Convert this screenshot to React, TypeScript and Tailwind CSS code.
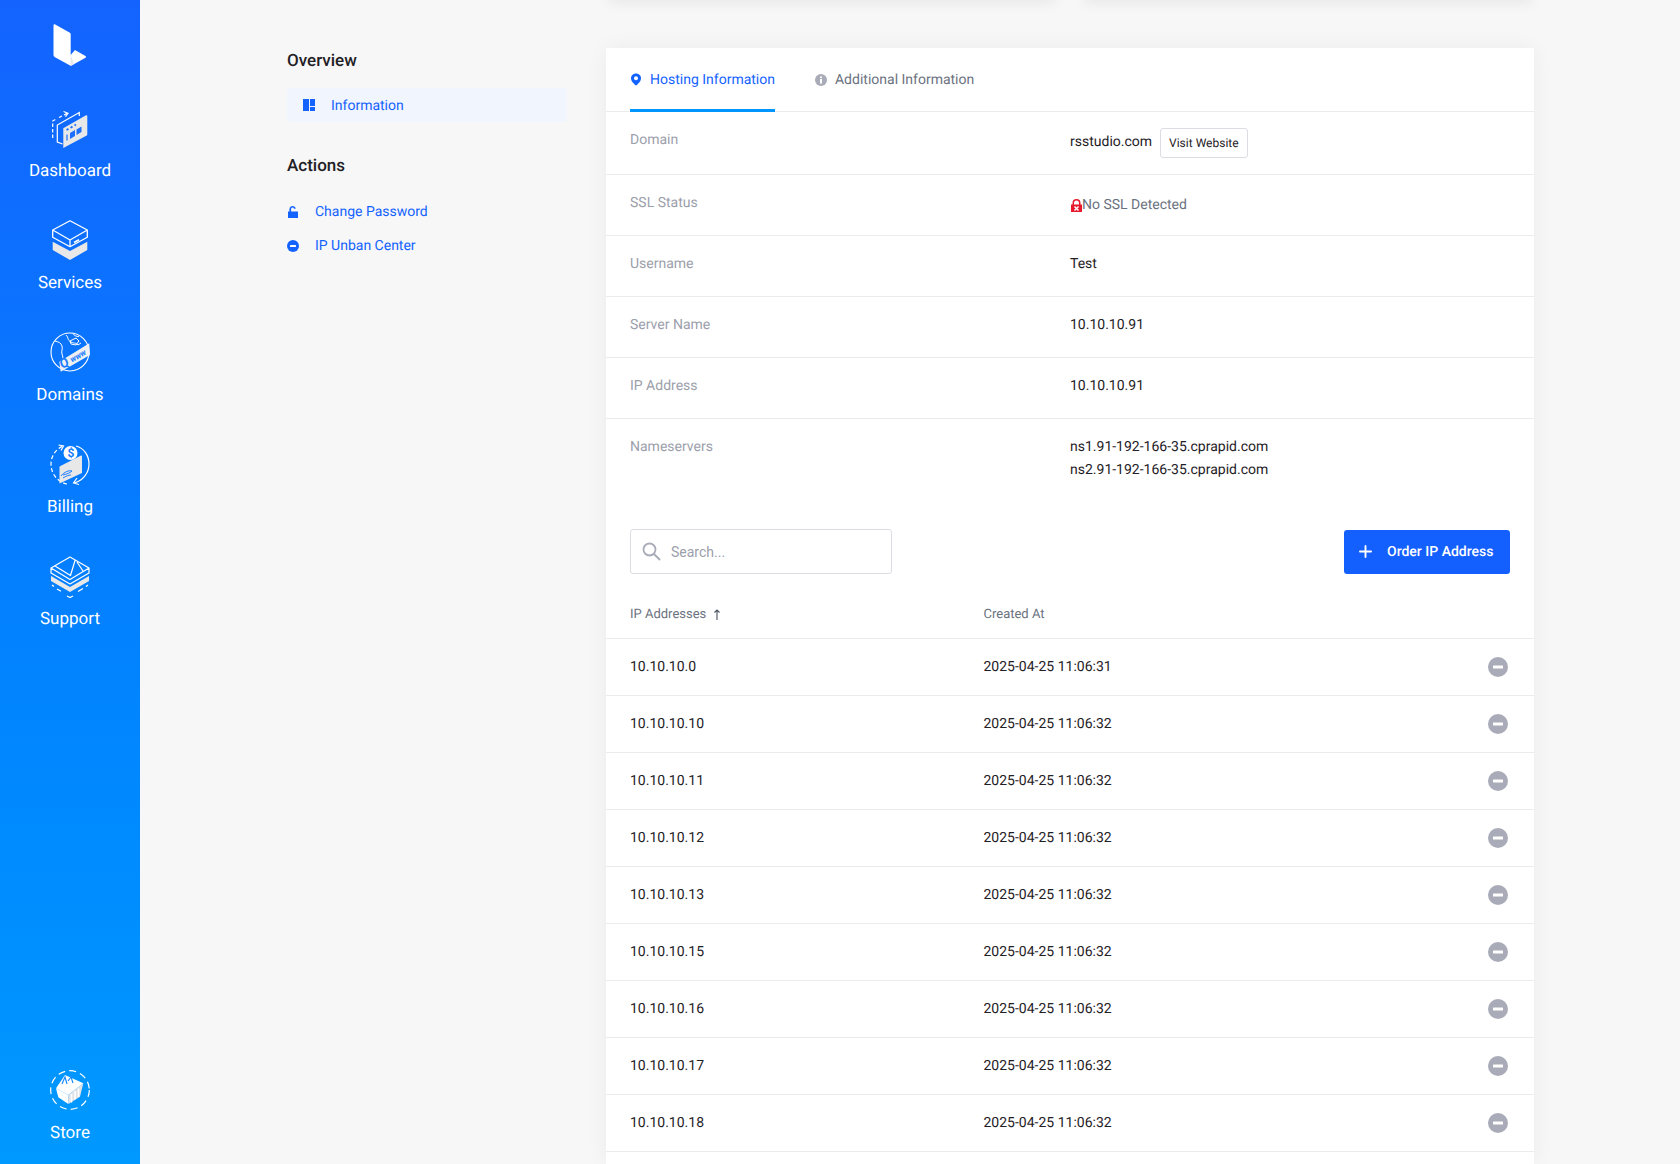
import { Plus } from "lucide-react";

const details = [
  { label: "Username", value: "Test" },
  { label: "Server Name", value: "10.10.10.91" },
  { label: "IP Address", value: "10.10.10.91" },
];

const ips = [
  ["10.10.10.0", "2025-04-25 11:06:31"],
  ["10.10.10.10", "2025-04-25 11:06:32"],
  ["10.10.10.11", "2025-04-25 11:06:32"],
  ["10.10.10.12", "2025-04-25 11:06:32"],
  ["10.10.10.13", "2025-04-25 11:06:32"],
  ["10.10.10.15", "2025-04-25 11:06:32"],
  ["10.10.10.16", "2025-04-25 11:06:32"],
  ["10.10.10.17", "2025-04-25 11:06:32"],
  ["10.10.10.18", "2025-04-25 11:06:32"],
];

function Logo() {
  return (
    <svg width="34" height="43" viewBox="0 0 34 43" className="block">
      <path
        d="M.5 1.500c0-1 .8-1.500 1.700-1L16.500 8.500c.8.400 1.200 1 1.200 2V31l3.600-4.200c.4-.5 1-.6 1.500-.3L32.500 32c.7.400.7 1.300 0 1.700L19 41.300c-.8.500-1.600.5-2.400 0L2 33.200c-1-.6-1.500-1.300-1.500-2.400z"
        fill="#ffffff"
      />
      <path d="M17.700 31l-.4 10.700c.5.100 1.100 0 1.700-.4l2-1.200z" fill="#e6e8ee" />
    </svg>
  );
}

function DashboardIcon() {
  return (
    <svg width="40" height="40" viewBox="0 0 40 40" fill="none" className="block">
      <path d="M2.700 30V13L6 11M9 9.500l3-1.500M14 7l3-1.600" stroke="#fff" strokeWidth="1.200" strokeDasharray="3.500 2" />
      <path d="M13.500 3.500l4.500 1.700-2.500 3.500" stroke="#fff" strokeWidth="1.200" />
      <path d="M12.500 36l-5.200-2V17L29.300 4.500V8" stroke="#fff" strokeWidth="1.200" />
      <path d="M13.300 20.300L36 7.300c.7-.4 1.300 0 1.300.7V26.300c0 .7-.3 1.200-1 1.500L13.300 40z" fill="#e8e8e8" />
      <path d="M16.500 22l2-1.100M20.500 19.700l2-1.100M24.500 17.400l1.500-.9" stroke="#1c6fff" strokeWidth="1.800" />
      <path d="M20 25l5-3v6l-5 3zM26.500 21.500l5-3v5.500l-5 3z" fill="#1c6fff" />
      <path d="M17 26.500v6" stroke="#1c6fff" strokeWidth="1.200" />
    </svg>
  );
}

function ServicesIcon() {
  return (
    <svg width="40" height="40" viewBox="0 0 40 40" fill="none" className="block">
      <path d="M2.700 21.700V30L20 40l17.300-10v-8.300L20 31z" fill="#e8e8e8" />
      <path
        d="M20 .8L37.300 10v7.300L20 26.700 2.700 17.300V10zM2.700 10L20 20l17.300-10M20 20v6.700"
        stroke="#fff"
        strokeWidth="1.300"
        strokeLinejoin="round"
      />
      <path d="M24 22.500l5-2.800" stroke="#fff" strokeWidth="1.600" />
    </svg>
  );
}

function DomainsIcon() {
  return (
    <svg width="40" height="40" viewBox="0 0 40 40" fill="none" className="block">
      <circle cx="20" cy="20" r="19" stroke="#fff" strokeWidth="1.100" />
      <path
        d="M5 9c4 1 6 2 7 5s-1 5 0 8 1 4 1 6M16 3c3 3 1 5 5 7s4 0 7 3l3-2M23 1.500c1 2 3 3 6 3M20 9l6-3 3 3-3 4-5-1z"
        stroke="#fff"
        strokeWidth="1"
      />
      <path d="M9.300 29.700L39.300 11.300 40 23 10.700 39.700z" fill="#eef0f3" />
      <text
        x="12.500"
        y="37"
        fontSize="13"
        fontWeight="700"
        fontStyle="italic"
        fill="#1c7cff"
        transform="rotate(-30 12.500 37)"
        fontFamily="Roboto, sans-serif"
      >
        Q
      </text>
      <text
        x="22"
        y="30.500"
        fontSize="8"
        fontWeight="700"
        fontStyle="italic"
        fill="#1c7cff"
        transform="rotate(-30 22 30.500)"
        fontFamily="Roboto, sans-serif"
      >
        www
      </text>
    </svg>
  );
}

function BillingIcon() {
  return (
    <svg width="40" height="42" viewBox="0 0 40 42" fill="none" className="block">
      <path d="M26 2c8 2 13 9.500 13 18 0 9-6 16.500-14.500 18.800" stroke="#fff" strokeWidth="1.200" />
      <path d="M27 34l-3.500 5 5.500 1.500" stroke="#fff" strokeWidth="1.200" />
      <path
        d="M17 40c-8-1.500-16-9-16-20C1 12 6 5 13 2"
        stroke="#fff"
        strokeWidth="1.200"
        strokeDasharray="4 2.500"
      />
      <path d="M8.500 1l5 1-2.500 4.500" stroke="#fff" strokeWidth="1.200" />
      <circle cx="20.500" cy="9" r="7" fill="#fff" />
      <text x="17.500" y="13.200" fontSize="12" fontWeight="700" fill="#1c7cff" fontFamily="Roboto, sans-serif">
        $
      </text>
      <path d="M9.500 22.500L31 11.500c.5-.2 1 0 1 .6v17l-22.500 10.500z" fill="#e8e8e8" />
      <path d="M11 32c3-4 8-6 11-5-2 2-5 3-9 4" stroke="#1c7cff" strokeWidth="1" />
      <path d="M13 34c3-2 6-3 8-3" stroke="#1c7cff" strokeWidth="1" />
    </svg>
  );
}

function SupportIcon() {
  return (
    <svg width="40" height="42" viewBox="0 0 40 42" fill="none" className="block">
      <path d="M1 20v5l19 11 19-11v-5L20 31z" fill="#e8e8e8" />
      <path
        d="M20 1l19 11v5L20 28 1 17v-5zM1 12l19 11.500L39 12M5 10l15.500 9.500L25 4.500M27 6l6 9"
        stroke="#fff"
        strokeWidth="1.200"
        strokeLinejoin="round"
      />
      <path d="M2 29l2 1.500M7 33l4 2.300M17 40l3 1.500 3-1.500M28 35.500l5-3M36 30.500l2-1.500" stroke="#fff" strokeWidth="1.200" />
    </svg>
  );
}

function StoreIcon() {
  return (
    <svg width="40" height="40" viewBox="0 0 40 40" fill="none" className="block">
      <circle cx="20" cy="20" r="19.300" stroke="#fff" strokeWidth="1.200" strokeDasharray="7 4.200" />
      <path d="M6 18.300L15 5l18.300 8.300L18.300 25z" fill="#fff" />
      <path d="M6 18.300L18.300 25v9L8.300 27.300z" fill="#fff" />
      <path d="M18.300 25l15-11.700L30 26.700 18.300 34z" fill="#dfe2e7" />
      <path d="M21.500 24v8.500M25 21v8.500M28.500 18.500V27" stroke="#fff" strokeWidth="1.500" />
      <path d="M12 14l3-7 2 7M18 11l3-4 2 6" stroke="#1c8cff" strokeWidth="1.200" />
    </svg>
  );
}

function NavItem({ icon, label }: { icon: React.ReactNode; label: string }) {
  return (
    <a className="flex h-[112px] flex-col items-center">
      <span className="flex h-10 items-start justify-center">{icon}</span>
      <span className="mt-[11px] text-[17px] leading-6 text-white">{label}</span>
    </a>
  );
}

function MinusCircle({ color, size }: { color: string; size: number }) {
  return (
    <svg width={size} height={size} viewBox="0 0 20 20" className="block shrink-0">
      <circle cx="10" cy="10" r="10" fill={color} />
      <rect x="5" y="8.500" width="10" height="3" rx="0.500" fill="#fff" />
    </svg>
  );
}

export default function App() {
  return (
    <div className="flex h-[1164px] overflow-hidden bg-[#f7f7f7] font-[Roboto,sans-serif] text-[14px] [text-rendering:geometricPrecision]">
      <aside className="flex w-[140px] shrink-0 flex-col justify-between bg-gradient-to-b from-[#1463ff] to-[#0099ff] pb-[8px]">
        <div>
          <div className="flex h-[108px] justify-center pt-[24px]">
            <Logo />
          </div>
          <NavItem icon={<DashboardIcon />} label="Dashboard" />
          <NavItem icon={<ServicesIcon />} label="Services" />
          <NavItem icon={<DomainsIcon />} label="Domains" />
          <NavItem icon={<BillingIcon />} label="Billing" />
          <NavItem icon={<SupportIcon />} label="Support" />
        </div>
        <div className="h-[86px]">
          <NavItem icon={<StoreIcon />} label="Store" />
        </div>
      </aside>

      <main className="flex flex-1 pl-[147px]">
        <div className="w-[280px] shrink-0 pt-[49px]">
          <h2 className="text-[17px] leading-6 font-medium text-[#1f2126]">Overview</h2>
          <a className="mt-[15px] flex h-[34px] items-center rounded-[4px] bg-[#f1f5fe] pl-[16px] text-[#1463ff]">
            <svg width="12" height="12" viewBox="0 0 12 12" className="mr-[16px] block" fill="#1463ff">
              <rect x="0" y="0" width="6" height="12" />
              <rect x="7" y="0" width="5" height="7" />
              <rect x="7" y="8" width="5" height="4" />
            </svg>
            <span className="pt-[2px]">Information</span>
          </a>
          <h2 className="mt-[32px] text-[17px] leading-6 font-medium text-[#1f2126]">Actions</h2>
          <div className="mt-[23px] flex flex-col gap-[12px] text-[#1463ff]">
            <a className="flex h-[22px] items-center">
              <svg width="12" height="12" viewBox="0 0 12 12" className="mr-[16px] block" fill="#1463ff">
                <path d="M1 5.500h1.400V3.200C2.400 1.300 3.800 0 5.500 0 7.200 0 8.500 1 8.700 2.800H7C6.800 2 6.300 1.600 5.500 1.600c-.8 0-1.400.7-1.400 1.600v2.300H11V12H1z" />
              </svg>
              Change Password
            </a>
            <a className="flex h-[22px] items-center">
              <span className="mr-[16px]">
                <MinusCircle color="#1463ff" size={12} />
              </span>
              IP Unban Center
            </a>
          </div>
        </div>

        <div className="ml-[39px] flex w-[928px] shrink-0 flex-col">
          <div className="mt-[-12px] flex h-[12px] shrink-0 gap-[28px] px-[2px]">
            <div className="flex-1 rounded-[4px] bg-white shadow-[0_2px_14px_rgba(0,0,0,0.08)]" />
            <div className="flex-1 rounded-[4px] bg-white shadow-[0_2px_14px_rgba(0,0,0,0.08)]" />
          </div>

          <section className="mt-[48px] flex-1 bg-white shadow-[0_0_20px_rgba(0,0,0,0.05)]">
            <div className="flex h-[64px] gap-[40px] border-b border-[#ececef] px-[24px]">
              <a className="flex h-[64px] items-center border-b-[3px] border-[#0096ff] pt-[3px] text-[#1463ff]">
                <svg width="12" height="13" viewBox="0 0 12 13" className="mt-[-2px] mr-[8px] block" fill="none">
                  <path d="M6 .5C3 .5 1 2.700 1 5.200c0 3 3 5.800 5 7.300 2-1.500 5-4.300 5-7.300C11 2.700 9 .5 6 .5z" fill="#1463ff" />
                  <circle cx="6" cy="5.200" r="2" fill="#fff" />
                </svg>
                Hosting Information
              </a>
              <a className="flex h-[64px] items-center text-[#6b7280]">
                <svg width="12" height="12" viewBox="0 0 12 12" className="mr-[8px] block">
                  <circle cx="6" cy="6" r="6" fill="#a9acb8" />
                  <rect x="5" y="5" width="2" height="4.500" fill="#fff" />
                  <rect x="5" y="2.500" width="2" height="1.600" fill="#fff" />
                </svg>
                Additional Information
              </a>
            </div>

            <div className="grid h-[63px] grid-cols-2 border-b border-[#ececef] px-[24px] pt-[16px]">
              <div className="pt-px leading-[22px] text-[#9ca0ab]">Domain</div>
              <div className="flex items-start gap-[8px] text-[#1f2126]">
                <span className="leading-[28px]">rsstudio.com</span>
                <a className="flex h-[30px] items-center rounded-[3px] border border-[#dcdde3] px-[8px] text-[12px] text-[#1f2126]">
                  Visit Website
                </a>
              </div>
            </div>

            <div className="grid h-[61px] grid-cols-2 border-b border-[#ececef] px-[24px] pt-[17px]">
              <div className="leading-[22px] text-[#9ca0ab]">SSL Status</div>
              <div className="flex items-center self-start pt-[2px] leading-[22px] text-[#6b7280]">
                <svg width="11" height="13" viewBox="0 0 11 13" className="ml-px block">
                  <path d="M0 5.500h1.500V4a4 4 0 0 1 8 0v1.500H11V13H0zM3 5.500h5V4a2.500 2.500 0 0 0-5 0z" fill="#e8192c" />
                  <path d="M3.500 7.500l4 4M7.500 7.500l-4 4" stroke="#fff" strokeWidth="1.500" />
                </svg>
                No SSL Detected
              </div>
            </div>

            {details.map((row) => (
              <div key={row.label} className="grid h-[61px] grid-cols-2 border-b border-[#ececef] px-[24px] pt-[17px] leading-[22px]">
                <div className="text-[#9ca0ab]">{row.label}</div>
                <div className="text-[#1f2126]">{row.value}</div>
              </div>
            ))}

            <div className="grid grid-cols-2 px-[24px] pt-[17px]">
              <div className="leading-[22px] text-[#9ca0ab]">Nameservers</div>
              <div className="leading-[23px] text-[#1f2126]">
                <div>ns1.91-192-166-35.cprapid.com</div>
                <div>ns2.91-192-166-35.cprapid.com</div>
              </div>
            </div>

            <div className="mt-[47px] flex items-center justify-between px-[24px]">
              <div className="flex h-[45px] w-[262px] items-center rounded-[3px] border-[1.5px] border-[#dcdde3] pl-[11px]">
                <svg width="19" height="19" viewBox="0 0 19 19" fill="none" className="mr-[10px] block shrink-0">
                  <circle cx="7.500" cy="7.500" r="6" stroke="#a9acb8" strokeWidth="1.800" />
                  <path d="M12 12l6 6" stroke="#a9acb8" strokeWidth="2" />
                </svg>
                <input
                  placeholder="Search..."
                  className="w-full bg-transparent pt-[1px] text-[14px] outline-none placeholder:text-[#9ca0ab]"
                />
              </div>
              <a className="flex h-[44px] w-[166px] items-center rounded-[3px] bg-[#1460ff] pl-[12px] font-medium text-white">
                <Plus size={19} strokeWidth={2.400} className="mr-[12px]" />
                <span className="pt-px">Order IP Address</span>
              </a>
            </div>

            <div className="mt-[25px] grid h-[40px] grid-cols-[353.500px_1fr] border-b border-[#ececef] px-[24px] pt-[5px] text-[13px] leading-[22px] text-[#6b7280]">
              <div className="flex items-start">
                IP Addresses
                <svg width="8" height="11" viewBox="0 0 8 11" fill="none" className="mt-[5px] ml-[7px] block">
                  <path d="M4 11V1M1.500 3.500L4 1l2.500 2.500" stroke="#4b5563" strokeWidth="1.100" />
                </svg>
              </div>
              <div>Created At</div>
            </div>

            {ips.map(([ip, created]) => (
              <div
                key={ip}
                className="grid h-[57px] grid-cols-[353.500px_1fr_20px] items-center border-b border-[#ececef] pr-[26px] pl-[24px] text-[#1f2126]"
              >
                <div>{ip}</div>
                <div>{created}</div>
                <MinusCircle color="#a9acb8" size={20} />
              </div>
            ))}
          </section>
        </div>
      </main>
    </div>
  );
}
